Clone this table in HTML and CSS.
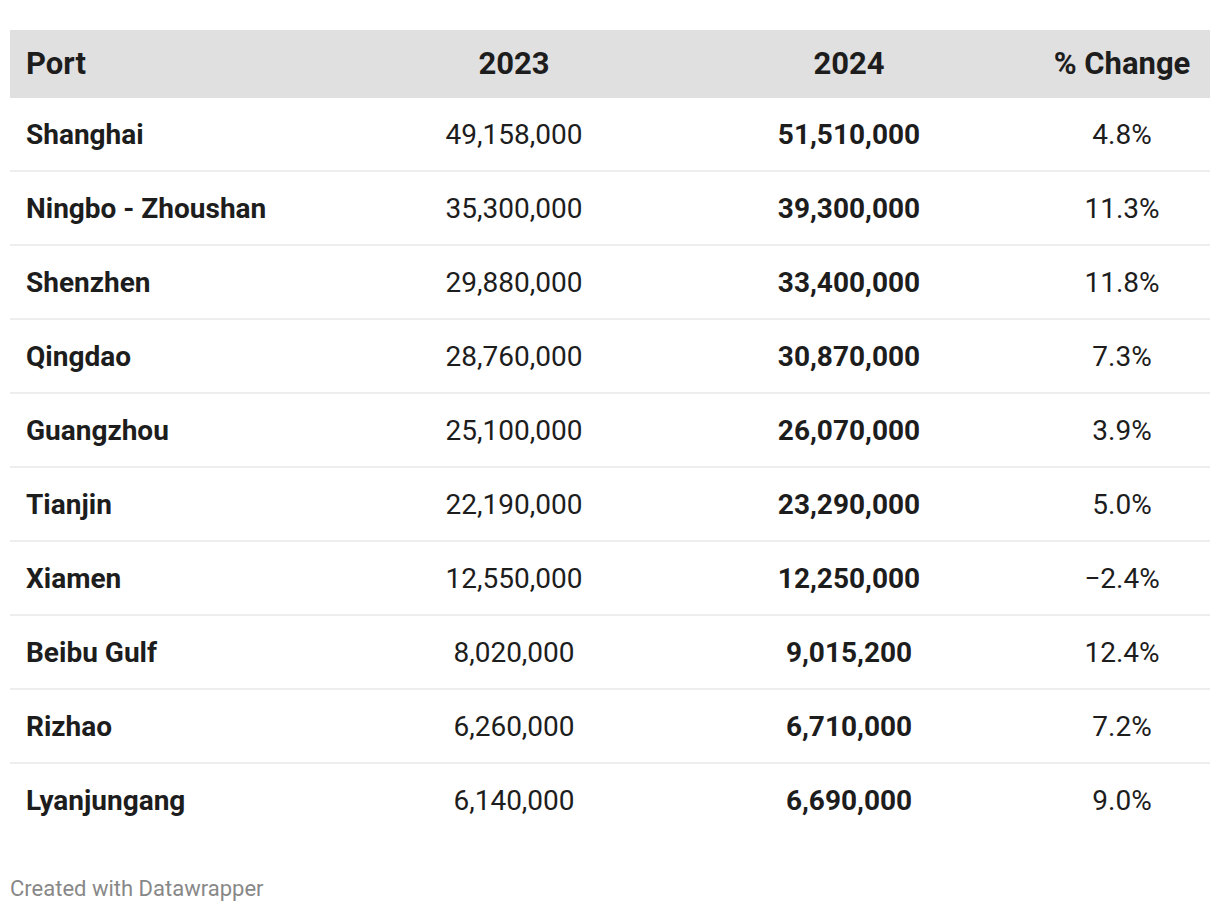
FILE: index.html
```html
<!DOCTYPE html>
<html lang="en">
<head>
<meta charset="utf-8">
<title>Top Chinese Ports</title>
<link rel="stylesheet" href="styles.css">
</head>
<body>
<div class="chart">
  <div class="table">
    <div class="row head">
      <div class="cell left">Port</div>
      <div class="cell">2023</div>
      <div class="cell">2024</div>
      <div class="cell">% Change</div>
    </div>
    <div class="row"><div class="cell left bold">Shanghai</div><div class="cell">49,158,000</div><div class="cell bold">51,510,000</div><div class="cell">4.8%</div></div>
    <div class="row"><div class="cell left bold">Ningbo - Zhoushan</div><div class="cell">35,300,000</div><div class="cell bold">39,300,000</div><div class="cell">11.3%</div></div>
    <div class="row"><div class="cell left bold">Shenzhen</div><div class="cell">29,880,000</div><div class="cell bold">33,400,000</div><div class="cell">11.8%</div></div>
    <div class="row"><div class="cell left bold">Qingdao</div><div class="cell">28,760,000</div><div class="cell bold">30,870,000</div><div class="cell">7.3%</div></div>
    <div class="row"><div class="cell left bold">Guangzhou</div><div class="cell">25,100,000</div><div class="cell bold">26,070,000</div><div class="cell">3.9%</div></div>
    <div class="row"><div class="cell left bold">Tianjin</div><div class="cell">22,190,000</div><div class="cell bold">23,290,000</div><div class="cell">5.0%</div></div>
    <div class="row"><div class="cell left bold">Xiamen</div><div class="cell">12,550,000</div><div class="cell bold">12,250,000</div><div class="cell">−2.4%</div></div>
    <div class="row"><div class="cell left bold">Beibu Gulf</div><div class="cell">8,020,000</div><div class="cell bold">9,015,200</div><div class="cell">12.4%</div></div>
    <div class="row"><div class="cell left bold">Rizhao</div><div class="cell">6,260,000</div><div class="cell bold">6,710,000</div><div class="cell">7.2%</div></div>
    <div class="row"><div class="cell left bold">Lyanjungang</div><div class="cell">6,140,000</div><div class="cell bold">6,690,000</div><div class="cell">9.0%</div></div>
  </div>
  <div class="footer">Created with Datawrapper</div>
</div>
</body>
</html>
```
FILE: styles.css
```css
html, body {
  margin: 0;
  padding: 0;
  background: #ffffff;
}

body {
  font-family: Roboto, "Liberation Sans", sans-serif;
  color: #1d1d1d;
}

.chart {
  padding: 30px 10px 0 10px;
}

.table {
  display: flex;
  flex-direction: column;
}

.row {
  display: grid;
  grid-template-columns: 354px 300px 370px 176px;
  align-items: center;
  height: 72px;
  border-bottom: 2px solid #eeeeee;
  font-size: 28px;
  line-height: 1.2;
}

.row:last-child {
  border-bottom: none;
}

.row .cell {
  padding-top: 2px;
}

.row.head {
  height: 68px;
  border-bottom: none;
  background: #e0e0e0;
  font-size: 31px;
  font-weight: 700;
}

.row.head .cell {
  padding-top: 0;
}

.cell {
  text-align: center;
  white-space: nowrap;
}

.cell.left {
  text-align: left;
  padding-left: 16px;
}

.bold {
  font-weight: 700;
}

.footer {
  margin-top: 40px;
  font-size: 22px;
  line-height: 1.2;
  color: #888888;
}
```
